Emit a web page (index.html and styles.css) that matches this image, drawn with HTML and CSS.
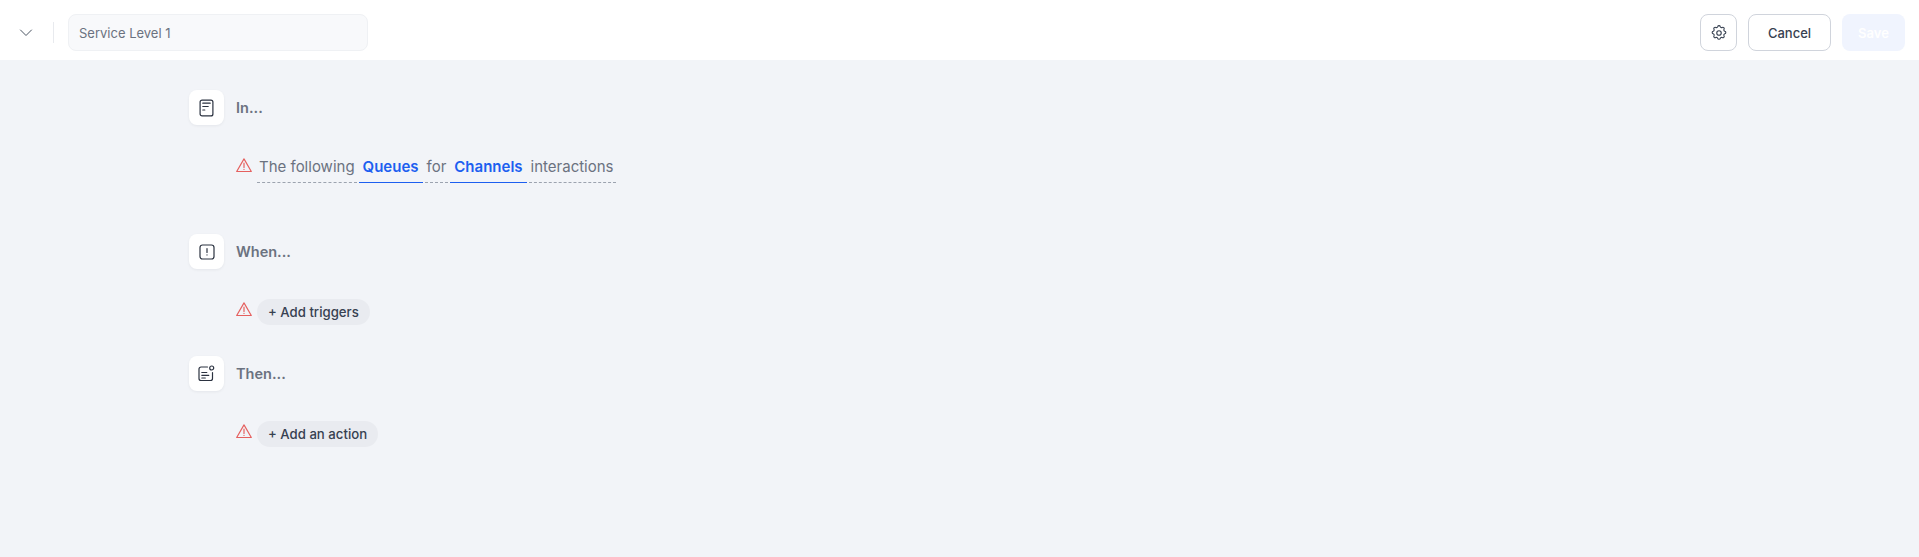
FILE: index.html
```html
<!DOCTYPE html>
<html>
<head>
<title>Service Level 1</title>
<link rel="stylesheet" href="styles.css">
</head>
<body>

<div class="topbar">
  <a class="collapse">
    <svg width="16" height="16" viewBox="0 0 16 16" fill="none" stroke="#4b5563" stroke-width="1" stroke-linecap="round" stroke-linejoin="round"><path d="M2.500 5l5.500 5.500L13.500 5"/></svg>
  </a>
  <div class="divider"></div>
  <div class="name-input">Service Level 1</div>
  <div class="actions">
    <button class="btn btn-icon">
      <svg width="18" height="18" viewBox="0 0 24 24" fill="none" stroke="#374151" stroke-width="1.500" stroke-linecap="round" stroke-linejoin="round"><path d="M10.300 3.500c.4-1.700 3-1.700 3.400 0a1.800 1.800 0 0 0 2.600 1.100c1.500-.9 3.300.8 2.400 2.400a1.800 1.800 0 0 0 1.100 2.600c1.700.4 1.700 3 0 3.400a1.800 1.800 0 0 0-1.100 2.600c.9 1.500-.9 3.300-2.400 2.400a1.800 1.800 0 0 0-2.600 1.100c-.4 1.700-3 1.700-3.400 0a1.800 1.800 0 0 0-2.600-1.100c-1.500.9-3.300-.9-2.400-2.400a1.800 1.800 0 0 0-1.100-2.600c-1.700-.4-1.700-3 0-3.400a1.800 1.800 0 0 0 1.100-2.600c-.9-1.600.9-3.300 2.400-2.400a1.800 1.800 0 0 0 2.600-1.100z"/><circle cx="12" cy="12" r="3"/></svg>
    </button>
    <button class="btn btn-cancel">Cancel</button>
    <button class="btn btn-save">Save</button>
  </div>
</div>

<div class="content">

  <div class="step step-in">
    <div class="step-head">
      <div class="step-icon">
        <svg width="15" height="18" viewBox="0 0 15 18" fill="none" stroke="#2b3240" stroke-width="1.200" stroke-linecap="round"><rect x="1.100" y="1.100" width="12.800" height="15.800" rx="2"/><path d="M3.800 4.200h7.400M3.800 7.500h5.400M3.800 11h2"/></svg>
      </div>
      <div class="step-title">In...</div>
    </div>
    <div class="step-body">
      <svg class="warn" width="16" height="15" viewBox="0 0 16 15" fill="none" stroke="#e5605f" stroke-width="1.200" stroke-linecap="round" stroke-linejoin="round"><path d="M8 .9L15.300 13.500H.7z"/><path d="M8 5.200v4.200M8 11.400v.1"/></svg>
      <div class="sentence">
        <span class="word">The following</span>
        <span class="word word-link">Queues</span>
        <span class="word">for</span>
        <span class="word word-link">Channels</span>
        <span class="word">interactions</span>
      </div>
    </div>
  </div>

  <div class="step step-when">
    <div class="step-head">
      <div class="step-icon">
        <svg width="16" height="16" viewBox="0 0 16 16" fill="none" stroke="#2b3240" stroke-width="1.200" stroke-linecap="round"><rect x="1" y="1" width="14" height="14" rx="2.500"/><path d="M8 4.600v3.900M8 10.900v.1"/></svg>
      </div>
      <div class="step-title">When...</div>
    </div>
    <div class="step-body">
      <svg class="warn" width="16" height="15" viewBox="0 0 16 15" fill="none" stroke="#e5605f" stroke-width="1.200" stroke-linecap="round" stroke-linejoin="round"><path d="M8 .9L15.300 13.500H.7z"/><path d="M8 5.200v4.200M8 11.400v.1"/></svg>
      <button class="pill">+ Add triggers</button>
    </div>
  </div>

  <div class="step step-then">
    <div class="step-head">
      <div class="step-icon">
        <svg width="17" height="17" viewBox="0 0 17 17" fill="none" stroke="#2b3240" stroke-width="1.200" stroke-linecap="round"><path d="M9.500 2H3a2 2 0 0 0-2 2v9.500a2 2 0 0 0 2 2h9.500a2 2 0 0 0 2-2V7.500"/><circle cx="13.700" cy="3" r="2"/><path d="M3.800 7.500h5M3.800 10.300h7M3.800 13h3.500"/></svg>
      </div>
      <div class="step-title">Then...</div>
    </div>
    <div class="step-body">
      <svg class="warn" width="16" height="15" viewBox="0 0 16 15" fill="none" stroke="#e5605f" stroke-width="1.200" stroke-linecap="round" stroke-linejoin="round"><path d="M8 .9L15.300 13.500H.7z"/><path d="M8 5.200v4.200M8 11.400v.1"/></svg>
      <button class="pill">+ Add an action</button>
    </div>
  </div>

</div>

</body>
</html>
```
FILE: styles.css
```css
* {
  box-sizing: border-box;
}

html, body {
  height: 100%;
}

body {
  margin: 0;
  font-family: Inter, "Liberation Sans", sans-serif;
  background-color: #f2f4f8;
  color: #374151;
  overflow: hidden;
}

.topbar {
  display: flex;
  align-items: center;
  height: 60px;
  padding: 5px 14px 0 18px;
  background-color: white;
}

.collapse {
  display: flex;
  width: 16px;
  height: 16px;
}

.divider {
  width: 1px;
  height: 21px;
  margin: 0 14px 0 19px;
  background-color: #e8eaee;
}

.name-input {
  display: flex;
  align-items: center;
  width: 300px;
  height: 37px;
  padding-left: 10px;
  font-size: 13px;
  color: #6b7280;
  background-color: #f8f9fb;
  border: 1px solid #eff1f4;
  border-radius: 8px;
}

.actions {
  display: flex;
  gap: 11px;
  margin-left: auto;
}

.btn {
  height: 37px;
  font-family: inherit;
  font-size: 13px;
  font-weight: 500;
  border-radius: 8px;
  background-color: white;
}

.btn-icon {
  display: flex;
  align-items: center;
  justify-content: center;
  width: 37px;
  padding: 0;
  border: 1px solid #d0d4dc;
}

.btn-cancel {
  width: 83px;
  color: #374151;
  border: 1px solid #d0d4dc;
}

.btn-save {
  width: 63px;
  color: white;
  font-weight: 600;
  background-color: #f0f4fe;
  border: 0;
}

.content {
  padding-left: 189px;
}

.step-head {
  display: flex;
  align-items: center;
  gap: 12px;
}

.step-icon {
  display: flex;
  align-items: center;
  justify-content: center;
  width: 35px;
  height: 35px;
  background-color: white;
  border-radius: 8px;
  box-shadow: 0 1px 3px rgba(16, 24, 40, 0.06);
}

.step-title {
  font-size: 14.500px;
  font-weight: 600;
  color: #6b7280;
}

.step-body {
  display: flex;
  align-items: flex-start;
  padding-left: 47px;
}

.warn {
  flex: none;
  margin-top: 3px;
  margin-right: 5px;
}

.step-in {
  padding-top: 30px;
}

.step-in .step-body {
  margin-top: 30px;
}

.step-when {
  padding-top: 51px;
}

.step-then {
  padding-top: 31px;
}

.step-when .step-body,
.step-then .step-body {
  margin-top: 30px;
}

.sentence {
  display: flex;
  gap: 2px;
}

.word {
  padding: 0 2px 3px;
  font-size: 15px;
  line-height: 24px;
  color: #6b7280;
  border-bottom: 1px dashed #9ca3af;
}

.word-link {
  padding: 0 4px 3px;
  font-weight: 600;
  color: #1d5ff0;
  border-bottom: 1px solid #1d5ff0;
}

.pill {
  height: 26px;
  padding: 0 11px;
  font-family: inherit;
  font-size: 13.200px;
  font-weight: 500;
  color: #374151;
  background-color: #e9ebf0;
  border: 0;
  border-radius: 13px;
}
```
